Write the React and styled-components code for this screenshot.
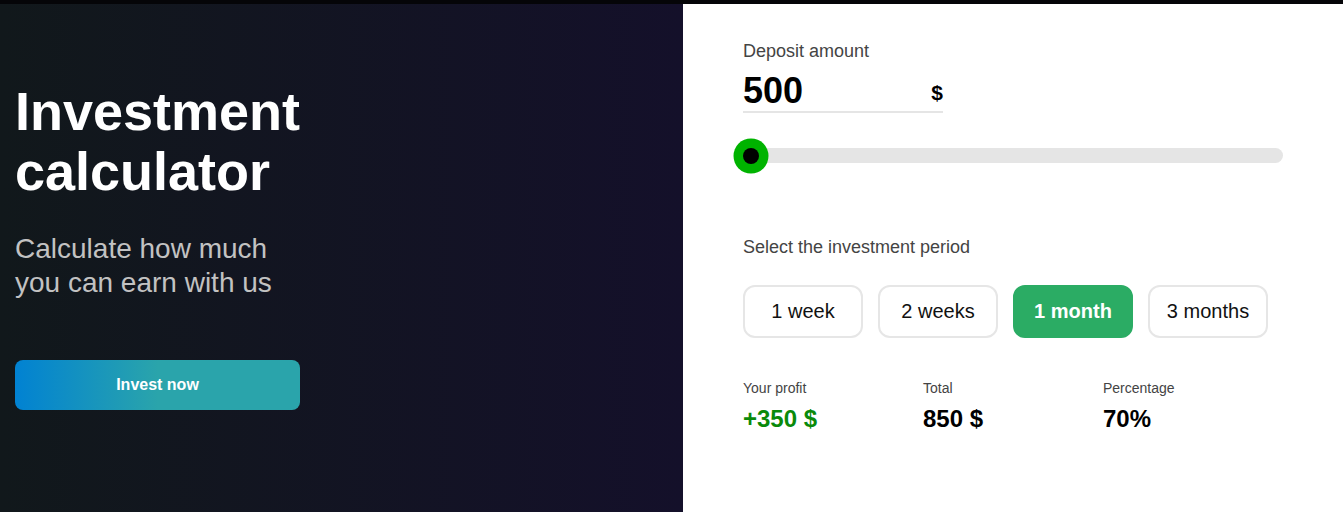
import React, { useState } from 'react'
import styled, { createGlobalStyle } from 'styled-components'

const GlobalStyle = createGlobalStyle`
  * { box-sizing: border-box; }
  html, body { margin: 0; padding: 0; }
  body {
    font-family: "Liberation Sans", Arial, sans-serif;
    background: #fff;
    overflow: hidden;
  }
`

const TopBar = styled.div`
  height: 4px;
  background: #050508;
`

const Page = styled.div`
  display: flex;
  height: 508px;
`

const Hero = styled.section`
  flex: 1;
  background: linear-gradient(90deg, #11181b 0%, #14102a 100%);
  padding: 77px 15px 0 15px;
`

const Title = styled.h1`
  margin: 0;
  width: 300px;
  color: #fff;
  font-size: 54px;
  line-height: 60px;
  font-weight: 700;
`

const Subtitle = styled.p`
  margin: 31px 0 0;
  width: 300px;
  color: #c2c2c2;
  font-size: 28px;
  line-height: 34px;
`

const InvestButton = styled.button`
  display: block;
  margin-top: 60px;
  width: 285px;
  height: 50px;
  border: none;
  border-radius: 8px;
  background: linear-gradient(90deg, #0182d2 0%, #2aa4ab 50%, #2aa4ab 100%);
  color: #fff;
  font-family: inherit;
  font-size: 16px;
  font-weight: 700;
  cursor: pointer;
`

const Calculator = styled.section`
  width: 660px;
  background: #fff;
  padding: 37px 60px 0;
`

const Label = styled.div`
  color: #444;
  font-size: 18px;
  line-height: 21px;
`

const AmountRow = styled.label`
  display: flex;
  align-items: flex-end;
  justify-content: space-between;
  width: 200px;
  margin-top: 9px;
  border-bottom: 2px solid #e5e5e5;
`

const AmountInput = styled.input`
  width: 150px;
  height: 40px;
  padding: 0;
  border: none;
  outline: none;
  font-family: inherit;
  font-size: 36px;
  line-height: 40px;
  font-weight: 700;
  color: #000;
  background: transparent;
`

const Currency = styled.span`
  margin-bottom: 6px;
  font-size: 21px;
  line-height: 24px;
  font-weight: 700;
  color: #000;
`

const Range = styled.input`
  display: block;
  -webkit-appearance: none;
  appearance: none;
  width: 540px;
  height: 15px;
  margin: 35px 0 10px;
  border-radius: 8px;
  background: #e5e5e5;
  outline: none;

  &::-webkit-slider-thumb {
    -webkit-appearance: none;
    appearance: none;
    width: 16px;
    height: 16px;
    border-radius: 50%;
    background: #000;
    box-shadow: 0 0 0 9.5px #00b300;
    cursor: pointer;
  }
  &::-moz-range-thumb {
    width: 16px;
    height: 16px;
    border: none;
    border-radius: 50%;
    background: #000;
    box-shadow: 0 0 0 9.5px #00b300;
  }
`

const PeriodLabel = styled(Label)`
  margin-top: 74px;
`

const Periods = styled.div`
  display: flex;
  gap: 15px;
  margin-top: 27px;
`

const Period = styled.button`
  width: 120px;
  height: 53px;
  border: 2px solid ${p => (p.$active ? '#2bac64' : '#e6e6e6')};
  border-radius: 12px;
  background: ${p => (p.$active ? '#2bac64' : '#fff')};
  color: ${p => (p.$active ? '#fff' : '#111')};
  font-family: inherit;
  font-size: 20px;
  font-weight: ${p => (p.$active ? 700 : 400)};
  cursor: pointer;
`

const Stats = styled.div`
  display: grid;
  grid-template-columns: repeat(3, 180px);
  margin-top: 42px;
`

const StatLabel = styled.div`
  color: #444;
  font-size: 14px;
  line-height: 16px;
`

const StatValue = styled.div`
  margin-top: 9px;
  color: ${p => p.$color || '#000'};
  font-size: 24px;
  line-height: 28px;
  font-weight: 700;
`

const periods = [
  { name: '1 week', rate: 0.1 },
  { name: '2 weeks', rate: 0.25 },
  { name: '1 month', rate: 0.7 },
  { name: '3 months', rate: 1.5 },
]

export default function App() {
  const [amount, setAmount] = useState(500)
  const [period, setPeriod] = useState(2)

  const rate = periods[period].rate
  const profit = Math.round(amount * rate)

  return (
    <>
      <GlobalStyle />
      <TopBar />
      <Page>
        <Hero>
          <Title>Investment calculator</Title>
          <Subtitle>Calculate how much you can earn with us</Subtitle>
          <InvestButton>Invest now</InvestButton>
        </Hero>

        <Calculator>
          <Label>Deposit amount</Label>
          <AmountRow>
            <AmountInput
              value={amount}
              onChange={e => setAmount(Number(e.target.value) || 0)}
            />
            <Currency>$</Currency>
          </AmountRow>
          <Range
            type="range"
            min={500}
            max={10000}
            step={100}
            value={amount}
            onChange={e => setAmount(Number(e.target.value))}
          />

          <PeriodLabel>Select the investment period</PeriodLabel>
          <Periods>
            {periods.map((p, i) => (
              <Period key={p.name} $active={i === period} onClick={() => setPeriod(i)}>
                {p.name}
              </Period>
            ))}
          </Periods>

          <Stats>
            <div>
              <StatLabel>Your profit</StatLabel>
              <StatValue $color="#0a8a0a">+{profit} $</StatValue>
            </div>
            <div>
              <StatLabel>Total</StatLabel>
              <StatValue>{amount + profit} $</StatValue>
            </div>
            <div>
              <StatLabel>Percentage</StatLabel>
              <StatValue>{Math.round(rate * 100)}%</StatValue>
            </div>
          </Stats>
        </Calculator>
      </Page>
    </>
  )
}
